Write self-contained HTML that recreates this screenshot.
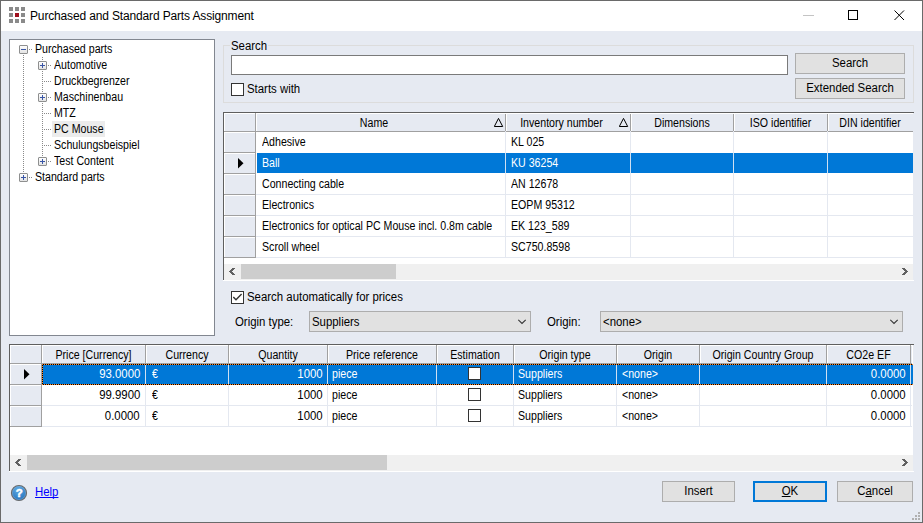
<!DOCTYPE html>
<html><head><meta charset="utf-8"><style>
html,body{margin:0;padding:0}
body{width:923px;height:523px;overflow:hidden;position:relative;background:#e6eaf2;font-family:"Liberation Sans",sans-serif}
body div{position:absolute;box-sizing:border-box}
.t,.tg,.tt{font-size:12px;line-height:13px;white-space:pre;color:#000}
.t{transform:scaleX(0.95)}
.tg{transform:scaleX(0.885)}
.tt{font-size:12px;line-height:14px;letter-spacing:-0.15px}
</style></head><body>
<div style="left:0px;top:0px;width:923px;height:31px;background:#fff"></div>
<div style="left:0px;top:0px;width:923px;height:1px;background:#6a6a6a"></div>
<div style="left:0px;top:0px;width:1px;height:523px;background:#6a6a6a"></div>
<div style="left:922px;top:0px;width:1px;height:523px;background:#6a6a6a"></div>
<div style="left:0px;top:522px;width:923px;height:1px;background:#6a6a6a"></div>
<div style="left:9px;top:7px;width:4px;height:4px;background:#8a8a8a"></div>
<div style="left:9px;top:13px;width:4px;height:4px;background:#8a8a8a"></div>
<div style="left:9px;top:19px;width:4px;height:4px;background:#8a8a8a"></div>
<div style="left:15px;top:7px;width:4px;height:4px;background:#8a8a8a"></div>
<div style="left:15px;top:13px;width:4px;height:4px;background:#a0101e"></div>
<div style="left:15px;top:19px;width:4px;height:4px;background:#8a8a8a"></div>
<div style="left:21px;top:7px;width:4px;height:4px;background:#8a8a8a"></div>
<div style="left:21px;top:13px;width:4px;height:4px;background:#8a8a8a"></div>
<div style="left:21px;top:19px;width:4px;height:4px;background:#8a8a8a"></div>
<div class="tt" style="left:30px;top:9px">Purchased and Standard Parts Assignment</div>
<div style="left:803px;top:15px;width:11px;height:1px;background:#c4c4c4"></div>
<div style="left:848px;top:10px;width:10px;height:10px;border:1px solid #000"></div>
<svg style="position:absolute;left:894px;top:10px" width="11" height="11"><path d="M0.5 0.5L10 10M10 0.5L0.5 10" stroke="#000" stroke-width="1"/></svg>
<div style="left:9px;top:39px;width:206px;height:297px;background:#fff;border:1px solid #828790"></div>
<div style="left:52px;top:121px;width:53px;height:16px;background:#ececec"></div>
<div class="tg" style="left:35px;top:43px;transform-origin:0 0;">Purchased parts</div>
<div class="tg" style="left:54px;top:59px;transform-origin:0 0;">Automotive</div>
<div class="tg" style="left:54px;top:75px;transform-origin:0 0;">Druckbegrenzer</div>
<div class="tg" style="left:54px;top:91px;transform-origin:0 0;">Maschinenbau</div>
<div class="tg" style="left:54px;top:107px;transform-origin:0 0;">MTZ</div>
<div class="tg" style="left:54px;top:123px;transform-origin:0 0;">PC Mouse</div>
<div class="tg" style="left:54px;top:139px;transform-origin:0 0;">Schulungsbeispiel</div>
<div class="tg" style="left:54px;top:155px;transform-origin:0 0;">Test Content</div>
<div class="tg" style="left:35px;top:171px;transform-origin:0 0;">Standard parts</div>
<svg style="position:absolute;left:0;top:0" width="923" height="523" fill="#8a8a8a"><rect x="29" y="49" width="1" height="1"/><rect x="31" y="49" width="1" height="1"/><rect x="48" y="65" width="1" height="1"/><rect x="50" y="65" width="1" height="1"/><rect x="44" y="81" width="1" height="1"/><rect x="46" y="81" width="1" height="1"/><rect x="48" y="81" width="1" height="1"/><rect x="50" y="81" width="1" height="1"/><rect x="48" y="97" width="1" height="1"/><rect x="50" y="97" width="1" height="1"/><rect x="44" y="113" width="1" height="1"/><rect x="46" y="113" width="1" height="1"/><rect x="48" y="113" width="1" height="1"/><rect x="50" y="113" width="1" height="1"/><rect x="44" y="129" width="1" height="1"/><rect x="46" y="129" width="1" height="1"/><rect x="48" y="129" width="1" height="1"/><rect x="50" y="129" width="1" height="1"/><rect x="44" y="145" width="1" height="1"/><rect x="46" y="145" width="1" height="1"/><rect x="48" y="145" width="1" height="1"/><rect x="50" y="145" width="1" height="1"/><rect x="48" y="161" width="1" height="1"/><rect x="50" y="161" width="1" height="1"/><rect x="29" y="177" width="1" height="1"/><rect x="31" y="177" width="1" height="1"/><rect x="23" y="55" width="1" height="1"/><rect x="23" y="57" width="1" height="1"/><rect x="23" y="59" width="1" height="1"/><rect x="23" y="61" width="1" height="1"/><rect x="23" y="63" width="1" height="1"/><rect x="23" y="65" width="1" height="1"/><rect x="23" y="67" width="1" height="1"/><rect x="23" y="69" width="1" height="1"/><rect x="23" y="71" width="1" height="1"/><rect x="23" y="73" width="1" height="1"/><rect x="23" y="75" width="1" height="1"/><rect x="23" y="77" width="1" height="1"/><rect x="23" y="79" width="1" height="1"/><rect x="23" y="81" width="1" height="1"/><rect x="23" y="83" width="1" height="1"/><rect x="23" y="85" width="1" height="1"/><rect x="23" y="87" width="1" height="1"/><rect x="23" y="89" width="1" height="1"/><rect x="23" y="91" width="1" height="1"/><rect x="23" y="93" width="1" height="1"/><rect x="23" y="95" width="1" height="1"/><rect x="23" y="97" width="1" height="1"/><rect x="23" y="99" width="1" height="1"/><rect x="23" y="101" width="1" height="1"/><rect x="23" y="103" width="1" height="1"/><rect x="23" y="105" width="1" height="1"/><rect x="23" y="107" width="1" height="1"/><rect x="23" y="109" width="1" height="1"/><rect x="23" y="111" width="1" height="1"/><rect x="23" y="113" width="1" height="1"/><rect x="23" y="115" width="1" height="1"/><rect x="23" y="117" width="1" height="1"/><rect x="23" y="119" width="1" height="1"/><rect x="23" y="121" width="1" height="1"/><rect x="23" y="123" width="1" height="1"/><rect x="23" y="125" width="1" height="1"/><rect x="23" y="127" width="1" height="1"/><rect x="23" y="129" width="1" height="1"/><rect x="23" y="131" width="1" height="1"/><rect x="23" y="133" width="1" height="1"/><rect x="23" y="135" width="1" height="1"/><rect x="23" y="137" width="1" height="1"/><rect x="23" y="139" width="1" height="1"/><rect x="23" y="141" width="1" height="1"/><rect x="23" y="143" width="1" height="1"/><rect x="23" y="145" width="1" height="1"/><rect x="23" y="147" width="1" height="1"/><rect x="23" y="149" width="1" height="1"/><rect x="23" y="151" width="1" height="1"/><rect x="23" y="153" width="1" height="1"/><rect x="23" y="155" width="1" height="1"/><rect x="23" y="157" width="1" height="1"/><rect x="23" y="159" width="1" height="1"/><rect x="23" y="161" width="1" height="1"/><rect x="23" y="163" width="1" height="1"/><rect x="23" y="165" width="1" height="1"/><rect x="23" y="167" width="1" height="1"/><rect x="23" y="169" width="1" height="1"/><rect x="23" y="171" width="1" height="1"/><rect x="42" y="57" width="1" height="1"/><rect x="42" y="59" width="1" height="1"/><rect x="42" y="61" width="1" height="1"/><rect x="42" y="63" width="1" height="1"/><rect x="42" y="65" width="1" height="1"/><rect x="42" y="67" width="1" height="1"/><rect x="42" y="69" width="1" height="1"/><rect x="42" y="71" width="1" height="1"/><rect x="42" y="73" width="1" height="1"/><rect x="42" y="75" width="1" height="1"/><rect x="42" y="77" width="1" height="1"/><rect x="42" y="79" width="1" height="1"/><rect x="42" y="81" width="1" height="1"/><rect x="42" y="83" width="1" height="1"/><rect x="42" y="85" width="1" height="1"/><rect x="42" y="87" width="1" height="1"/><rect x="42" y="89" width="1" height="1"/><rect x="42" y="91" width="1" height="1"/><rect x="42" y="93" width="1" height="1"/><rect x="42" y="95" width="1" height="1"/><rect x="42" y="97" width="1" height="1"/><rect x="42" y="99" width="1" height="1"/><rect x="42" y="101" width="1" height="1"/><rect x="42" y="103" width="1" height="1"/><rect x="42" y="105" width="1" height="1"/><rect x="42" y="107" width="1" height="1"/><rect x="42" y="109" width="1" height="1"/><rect x="42" y="111" width="1" height="1"/><rect x="42" y="113" width="1" height="1"/><rect x="42" y="115" width="1" height="1"/><rect x="42" y="117" width="1" height="1"/><rect x="42" y="119" width="1" height="1"/><rect x="42" y="121" width="1" height="1"/><rect x="42" y="123" width="1" height="1"/><rect x="42" y="125" width="1" height="1"/><rect x="42" y="127" width="1" height="1"/><rect x="42" y="129" width="1" height="1"/><rect x="42" y="131" width="1" height="1"/><rect x="42" y="133" width="1" height="1"/><rect x="42" y="135" width="1" height="1"/><rect x="42" y="137" width="1" height="1"/><rect x="42" y="139" width="1" height="1"/><rect x="42" y="141" width="1" height="1"/><rect x="42" y="143" width="1" height="1"/><rect x="42" y="145" width="1" height="1"/><rect x="42" y="147" width="1" height="1"/><rect x="42" y="149" width="1" height="1"/><rect x="42" y="151" width="1" height="1"/><rect x="42" y="153" width="1" height="1"/><rect x="42" y="155" width="1" height="1"/></svg>
<div style="left:19px;top:45px;width:9px;height:9px;border:1px solid #8e8f8f;border-radius:1px;background:linear-gradient(#fdfdfd,#e4e4e4)"></div>
<div style="left:21px;top:49px;width:5px;height:1px;background:#3a56a6"></div>
<div style="left:38px;top:61px;width:9px;height:9px;border:1px solid #8e8f8f;border-radius:1px;background:linear-gradient(#fdfdfd,#e4e4e4)"></div>
<div style="left:40px;top:65px;width:5px;height:1px;background:#3a56a6"></div>
<div style="left:42px;top:63px;width:1px;height:5px;background:#3a56a6"></div>
<div style="left:38px;top:93px;width:9px;height:9px;border:1px solid #8e8f8f;border-radius:1px;background:linear-gradient(#fdfdfd,#e4e4e4)"></div>
<div style="left:40px;top:97px;width:5px;height:1px;background:#3a56a6"></div>
<div style="left:42px;top:95px;width:1px;height:5px;background:#3a56a6"></div>
<div style="left:38px;top:157px;width:9px;height:9px;border:1px solid #8e8f8f;border-radius:1px;background:linear-gradient(#fdfdfd,#e4e4e4)"></div>
<div style="left:40px;top:161px;width:5px;height:1px;background:#3a56a6"></div>
<div style="left:42px;top:159px;width:1px;height:5px;background:#3a56a6"></div>
<div style="left:19px;top:173px;width:9px;height:9px;border:1px solid #8e8f8f;border-radius:1px;background:linear-gradient(#fdfdfd,#e4e4e4)"></div>
<div style="left:21px;top:177px;width:5px;height:1px;background:#3a56a6"></div>
<div style="left:23px;top:175px;width:1px;height:5px;background:#3a56a6"></div>
<div style="left:223px;top:45px;width:691px;height:58px;border:1px solid #dcdcdc"></div>
<div style="left:230px;top:40px;width:38px;height:10px;background:#e6eaf2"></div>
<div class="t" style="left:231px;top:40px;transform-origin:0 0;">Search</div>
<div style="left:231px;top:55px;width:557px;height:20px;background:#fff;border:1px solid #7a7a7a"></div>
<div style="left:795px;top:53px;width:110px;height:21px;background:#e1e1e1;border:1px solid #adadad"></div>
<div class="t" style="left:795px;top:57px;width:110px;text-align:center;transform-origin:50% 0;">Search</div>
<div style="left:795px;top:78px;width:110px;height:21px;background:#e1e1e1;border:1px solid #adadad"></div>
<div class="t" style="left:795px;top:82px;width:110px;text-align:center;transform-origin:50% 0;">Extended Search</div>
<div style="left:231px;top:83px;width:13px;height:13px;background:#fff;border:1px solid #333"></div>
<div class="t" style="left:247px;top:83px;transform-origin:0 0;">Starts with</div>
<div style="left:224px;top:113px;width:689px;height:167px;background:#fff"></div>
<div style="left:223px;top:112px;width:691px;height:1px;background:#5f5f5f"></div>
<div style="left:223px;top:112px;width:1px;height:169px;background:#5f5f5f"></div>
<div style="left:223px;top:280px;width:691px;height:1px;background:#fff"></div>
<div style="left:224px;top:113px;width:689px;height:18px;background:#e6eaf2"></div>
<div style="left:224px;top:131px;width:689px;height:1px;background:#a0a0a0"></div>
<div style="left:255px;top:113px;width:1px;height:18px;background:#a0a0a0"></div>
<div style="left:256px;top:113px;width:1px;height:18px;background:#fff"></div>
<div style="left:505px;top:113px;width:1px;height:18px;background:#a0a0a0"></div>
<div style="left:506px;top:113px;width:1px;height:18px;background:#fff"></div>
<div style="left:630px;top:113px;width:1px;height:18px;background:#a0a0a0"></div>
<div style="left:631px;top:113px;width:1px;height:18px;background:#fff"></div>
<div style="left:733px;top:113px;width:1px;height:18px;background:#a0a0a0"></div>
<div style="left:734px;top:113px;width:1px;height:18px;background:#fff"></div>
<div style="left:827px;top:113px;width:1px;height:18px;background:#a0a0a0"></div>
<div style="left:828px;top:113px;width:1px;height:18px;background:#fff"></div>
<div style="left:224px;top:113px;width:1px;height:18px;background:#fff"></div>
<div style="left:224px;top:113px;width:689px;height:1px;background:#fff"></div>
<div class="tg" style="left:255px;top:117px;width:238px;text-align:center;transform-origin:50% 0;">Name</div>
<svg style="position:absolute;left:494px;top:118px" width="10" height="10"><path d="M4.5 0.4L8.7 8.5H0.3Z" fill="none" stroke="#000" stroke-width="1"/></svg>
<div class="tg" style="left:505px;top:117px;width:113px;text-align:center;transform-origin:50% 0;">Inventory number</div>
<svg style="position:absolute;left:619px;top:118px" width="10" height="10"><path d="M4.5 0.4L8.7 8.5H0.3Z" fill="none" stroke="#000" stroke-width="1"/></svg>
<div class="tg" style="left:631px;top:117px;width:102px;text-align:center;transform-origin:50% 0;">Dimensions</div>
<div class="tg" style="left:734px;top:117px;width:93px;text-align:center;transform-origin:50% 0;">ISO identifier</div>
<div class="tg" style="left:828px;top:117px;width:84px;text-align:center;transform-origin:50% 0;">DIN identifier</div>
<div style="left:224px;top:132px;width:31px;height:126px;background:#e6eaf2"></div>
<div style="left:255px;top:113px;width:1px;height:145px;background:#a0a0a0"></div>
<div style="left:224px;top:152px;width:32px;height:1px;background:#a0a0a0"></div>
<div style="left:225px;top:132px;width:30px;height:1px;background:#fff"></div>
<div style="left:224px;top:132px;width:1px;height:20px;background:#fff"></div>
<div style="left:505px;top:131px;width:1px;height:22px;background:#e4e8f0"></div>
<div style="left:630px;top:131px;width:1px;height:22px;background:#e4e8f0"></div>
<div style="left:733px;top:131px;width:1px;height:22px;background:#e4e8f0"></div>
<div style="left:827px;top:131px;width:1px;height:22px;background:#e4e8f0"></div>
<div class="tg" style="left:262px;top:136px;transform-origin:0 0;color:#000">Adhesive</div>
<div class="tg" style="left:511px;top:136px;transform-origin:0 0;color:#000">KL 025</div>
<div style="left:224px;top:173px;width:32px;height:1px;background:#a0a0a0"></div>
<div style="left:225px;top:153px;width:30px;height:1px;background:#fff"></div>
<div style="left:224px;top:153px;width:1px;height:20px;background:#fff"></div>
<div style="left:505px;top:152px;width:1px;height:22px;background:#e4e8f0"></div>
<div style="left:630px;top:152px;width:1px;height:22px;background:#e4e8f0"></div>
<div style="left:733px;top:152px;width:1px;height:22px;background:#e4e8f0"></div>
<div style="left:827px;top:152px;width:1px;height:22px;background:#e4e8f0"></div>
<div style="left:257px;top:153px;width:656px;height:20px;background:#0078d7"></div>
<div style="left:505px;top:153px;width:1px;height:20px;background:#cfe0f2"></div>
<div style="left:630px;top:153px;width:1px;height:20px;background:#cfe0f2"></div>
<div style="left:733px;top:153px;width:1px;height:20px;background:#cfe0f2"></div>
<div style="left:827px;top:153px;width:1px;height:20px;background:#cfe0f2"></div>
<svg style="position:absolute;left:238px;top:158px" width="6" height="11"><path d="M0 0L5.5 5.2L0 10.4Z" fill="#000"/></svg>
<div class="tg" style="left:262px;top:157px;transform-origin:0 0;color:#fff">Ball</div>
<div class="tg" style="left:511px;top:157px;transform-origin:0 0;color:#fff">KU 36254</div>
<div style="left:224px;top:194px;width:32px;height:1px;background:#a0a0a0"></div>
<div style="left:225px;top:174px;width:30px;height:1px;background:#fff"></div>
<div style="left:224px;top:174px;width:1px;height:20px;background:#fff"></div>
<div style="left:256px;top:194px;width:657px;height:1px;background:#e4e8f0"></div>
<div style="left:505px;top:173px;width:1px;height:22px;background:#e4e8f0"></div>
<div style="left:630px;top:173px;width:1px;height:22px;background:#e4e8f0"></div>
<div style="left:733px;top:173px;width:1px;height:22px;background:#e4e8f0"></div>
<div style="left:827px;top:173px;width:1px;height:22px;background:#e4e8f0"></div>
<div class="tg" style="left:262px;top:178px;transform-origin:0 0;color:#000">Connecting cable</div>
<div class="tg" style="left:511px;top:178px;transform-origin:0 0;color:#000">AN 12678</div>
<div style="left:224px;top:215px;width:32px;height:1px;background:#a0a0a0"></div>
<div style="left:225px;top:195px;width:30px;height:1px;background:#fff"></div>
<div style="left:224px;top:195px;width:1px;height:20px;background:#fff"></div>
<div style="left:256px;top:215px;width:657px;height:1px;background:#e4e8f0"></div>
<div style="left:505px;top:194px;width:1px;height:22px;background:#e4e8f0"></div>
<div style="left:630px;top:194px;width:1px;height:22px;background:#e4e8f0"></div>
<div style="left:733px;top:194px;width:1px;height:22px;background:#e4e8f0"></div>
<div style="left:827px;top:194px;width:1px;height:22px;background:#e4e8f0"></div>
<div class="tg" style="left:262px;top:199px;transform-origin:0 0;color:#000">Electronics</div>
<div class="tg" style="left:511px;top:199px;transform-origin:0 0;color:#000">EOPM 95312</div>
<div style="left:224px;top:236px;width:32px;height:1px;background:#a0a0a0"></div>
<div style="left:225px;top:216px;width:30px;height:1px;background:#fff"></div>
<div style="left:224px;top:216px;width:1px;height:20px;background:#fff"></div>
<div style="left:256px;top:236px;width:657px;height:1px;background:#e4e8f0"></div>
<div style="left:505px;top:215px;width:1px;height:22px;background:#e4e8f0"></div>
<div style="left:630px;top:215px;width:1px;height:22px;background:#e4e8f0"></div>
<div style="left:733px;top:215px;width:1px;height:22px;background:#e4e8f0"></div>
<div style="left:827px;top:215px;width:1px;height:22px;background:#e4e8f0"></div>
<div class="tg" style="left:262px;top:220px;transform-origin:0 0;color:#000">Electronics for optical PC Mouse incl. 0.8m cable</div>
<div class="tg" style="left:511px;top:220px;transform-origin:0 0;color:#000">EK 123_589</div>
<div style="left:224px;top:257px;width:32px;height:1px;background:#a0a0a0"></div>
<div style="left:225px;top:237px;width:30px;height:1px;background:#fff"></div>
<div style="left:224px;top:237px;width:1px;height:20px;background:#fff"></div>
<div style="left:256px;top:257px;width:657px;height:1px;background:#e4e8f0"></div>
<div style="left:505px;top:236px;width:1px;height:22px;background:#e4e8f0"></div>
<div style="left:630px;top:236px;width:1px;height:22px;background:#e4e8f0"></div>
<div style="left:733px;top:236px;width:1px;height:22px;background:#e4e8f0"></div>
<div style="left:827px;top:236px;width:1px;height:22px;background:#e4e8f0"></div>
<div class="tg" style="left:262px;top:241px;transform-origin:0 0;color:#000">Scroll wheel</div>
<div class="tg" style="left:511px;top:241px;transform-origin:0 0;color:#000">SC750.8598</div>
<div style="left:224px;top:264px;width:689px;height:16px;background:#f0f0f0"></div>
<div style="left:241px;top:264px;width:155px;height:15px;background:#cdcdcd"></div>
<svg style="position:absolute;left:229px;top:268px" width="6" height="7" fill="#606060" shape-rendering="crispEdges"><rect x="3" y="0" width="3" height="1"/><rect x="2" y="1" width="3" height="1"/><rect x="1" y="2" width="3" height="1"/><rect x="0" y="3" width="3" height="1"/><rect x="1" y="4" width="3" height="1"/><rect x="2" y="5" width="3" height="1"/><rect x="3" y="6" width="3" height="1"/></svg>
<svg style="position:absolute;left:902px;top:268px" width="6" height="7" fill="#606060" shape-rendering="crispEdges"><rect x="0" y="0" width="3" height="1"/><rect x="1" y="1" width="3" height="1"/><rect x="2" y="2" width="3" height="1"/><rect x="3" y="3" width="3" height="1"/><rect x="2" y="4" width="3" height="1"/><rect x="1" y="5" width="3" height="1"/><rect x="0" y="6" width="3" height="1"/></svg>
<div style="left:231px;top:291px;width:13px;height:13px;background:#fff;border:1px solid #333"></div>
<svg style="position:absolute;left:233px;top:293px" width="10" height="9"><path d="M0.3 4L3 6.7L8.6 1.1" fill="none" stroke="#333" stroke-width="1.4"/></svg>
<div class="t" style="left:247px;top:291px;transform-origin:0 0;">Search automatically for prices</div>
<div class="t" style="left:235px;top:316px;transform-origin:0 0;">Origin type:</div>
<div style="left:309px;top:311px;width:222px;height:21px;background:#e1e1e1;border:1px solid #adadad"></div>
<div class="t" style="left:312px;top:316px;transform-origin:0 0;">Suppliers</div>
<svg style="position:absolute;left:518px;top:319px" width="9" height="6"><path d="M0.3 0.8L4 4.5L7.7 0.8" fill="none" stroke="#333" stroke-width="1.1"/></svg>
<div class="t" style="left:547px;top:316px;transform-origin:0 0;">Origin:</div>
<div style="left:600px;top:311px;width:303px;height:21px;background:#e1e1e1;border:1px solid #adadad"></div>
<div class="t" style="left:603px;top:316px;transform-origin:0 0;">&lt;none&gt;</div>
<svg style="position:absolute;left:890px;top:319px" width="9" height="6"><path d="M0.3 0.8L4 4.5L7.7 0.8" fill="none" stroke="#333" stroke-width="1.1"/></svg>
<div style="left:10px;top:345px;width:903px;height:126px;background:#fff"></div>
<div style="left:9px;top:344px;width:905px;height:1px;background:#5f5f5f"></div>
<div style="left:9px;top:344px;width:1px;height:128px;background:#5f5f5f"></div>
<div style="left:9px;top:471px;width:905px;height:1px;background:#fff"></div>
<div style="left:10px;top:345px;width:902px;height:18px;background:#e6eaf2"></div>
<div style="left:10px;top:363px;width:902px;height:1px;background:#a0a0a0"></div>
<div style="left:10px;top:345px;width:902px;height:1px;background:#fff"></div>
<div style="left:10px;top:345px;width:1px;height:18px;background:#fff"></div>
<div style="left:41px;top:345px;width:1px;height:18px;background:#a0a0a0"></div>
<div style="left:42px;top:345px;width:1px;height:18px;background:#fff"></div>
<div class="tg" style="left:42px;top:349px;width:103px;text-align:center;transform-origin:50% 0;">Price [Currency]</div>
<div style="left:145px;top:345px;width:1px;height:18px;background:#a0a0a0"></div>
<div style="left:146px;top:345px;width:1px;height:18px;background:#fff"></div>
<div class="tg" style="left:146px;top:349px;width:82px;text-align:center;transform-origin:50% 0;">Currency</div>
<div style="left:228px;top:345px;width:1px;height:18px;background:#a0a0a0"></div>
<div style="left:229px;top:345px;width:1px;height:18px;background:#fff"></div>
<div class="tg" style="left:229px;top:349px;width:98px;text-align:center;transform-origin:50% 0;">Quantity</div>
<div style="left:327px;top:345px;width:1px;height:18px;background:#a0a0a0"></div>
<div style="left:328px;top:345px;width:1px;height:18px;background:#fff"></div>
<div class="tg" style="left:328px;top:349px;width:108px;text-align:center;transform-origin:50% 0;">Price reference</div>
<div style="left:436px;top:345px;width:1px;height:18px;background:#a0a0a0"></div>
<div style="left:437px;top:345px;width:1px;height:18px;background:#fff"></div>
<div class="tg" style="left:437px;top:349px;width:76px;text-align:center;transform-origin:50% 0;">Estimation</div>
<div style="left:513px;top:345px;width:1px;height:18px;background:#a0a0a0"></div>
<div style="left:514px;top:345px;width:1px;height:18px;background:#fff"></div>
<div class="tg" style="left:514px;top:349px;width:102px;text-align:center;transform-origin:50% 0;">Origin type</div>
<div style="left:616px;top:345px;width:1px;height:18px;background:#a0a0a0"></div>
<div style="left:617px;top:345px;width:1px;height:18px;background:#fff"></div>
<div class="tg" style="left:617px;top:349px;width:82px;text-align:center;transform-origin:50% 0;">Origin</div>
<div style="left:699px;top:345px;width:1px;height:18px;background:#a0a0a0"></div>
<div style="left:700px;top:345px;width:1px;height:18px;background:#fff"></div>
<div class="tg" style="left:700px;top:349px;width:126px;text-align:center;transform-origin:50% 0;">Origin Country Group</div>
<div style="left:826px;top:345px;width:1px;height:18px;background:#a0a0a0"></div>
<div style="left:827px;top:345px;width:1px;height:18px;background:#fff"></div>
<div class="tg" style="left:827px;top:349px;width:83px;text-align:center;transform-origin:50% 0;">CO2e EF</div>
<div style="left:910px;top:345px;width:1px;height:18px;background:#a0a0a0"></div>
<div style="left:10px;top:364px;width:31px;height:63px;background:#e6eaf2"></div>
<div style="left:41px;top:345px;width:1px;height:82px;background:#a0a0a0"></div>
<div style="left:10px;top:384px;width:32px;height:1px;background:#a0a0a0"></div>
<div style="left:11px;top:364px;width:30px;height:1px;background:#fff"></div>
<div style="left:10px;top:364px;width:1px;height:20px;background:#fff"></div>
<div style="left:42px;top:384px;width:870px;height:1px;background:#e4e8f0"></div>
<div style="left:145px;top:364px;width:1px;height:20px;background:#e4e8f0"></div>
<div style="left:228px;top:364px;width:1px;height:20px;background:#e4e8f0"></div>
<div style="left:327px;top:364px;width:1px;height:20px;background:#e4e8f0"></div>
<div style="left:436px;top:364px;width:1px;height:20px;background:#e4e8f0"></div>
<div style="left:513px;top:364px;width:1px;height:20px;background:#e4e8f0"></div>
<div style="left:616px;top:364px;width:1px;height:20px;background:#e4e8f0"></div>
<div style="left:699px;top:364px;width:1px;height:20px;background:#e4e8f0"></div>
<div style="left:826px;top:364px;width:1px;height:20px;background:#e4e8f0"></div>
<div style="left:910px;top:364px;width:1px;height:20px;background:#e4e8f0"></div>
<div style="left:42px;top:364px;width:871px;height:21px;background:#0078d7"></div>
<div style="left:145px;top:365px;width:1px;height:19px;background:#cfe0f2"></div>
<div style="left:228px;top:365px;width:1px;height:19px;background:#cfe0f2"></div>
<div style="left:327px;top:365px;width:1px;height:19px;background:#cfe0f2"></div>
<div style="left:436px;top:365px;width:1px;height:19px;background:#cfe0f2"></div>
<div style="left:513px;top:365px;width:1px;height:19px;background:#cfe0f2"></div>
<div style="left:616px;top:365px;width:1px;height:19px;background:#cfe0f2"></div>
<div style="left:699px;top:365px;width:1px;height:19px;background:#cfe0f2"></div>
<div style="left:826px;top:365px;width:1px;height:19px;background:#cfe0f2"></div>
<div style="left:910px;top:365px;width:1px;height:19px;background:#cfe0f2"></div>
<div style="left:42px;top:364px;width:871px;height:1px;background:repeating-linear-gradient(90deg,#ff8728 0 1px,#000 1px 2px)"></div>
<div style="left:42px;top:384px;width:871px;height:1px;background:repeating-linear-gradient(90deg,#ff8728 0 1px,#000 1px 2px)"></div>
<div style="left:42px;top:364px;width:1px;height:21px;background:repeating-linear-gradient(180deg,#ff8728 0 1px,#000 1px 2px)"></div>
<svg style="position:absolute;left:24px;top:369px" width="6" height="11"><path d="M0 0L5.5 5.2L0 10.4Z" fill="#000"/></svg>
<div class="tg" style="left:0px;top:368px;transform-origin:0 0;"></div>
<div class="t" style="right:783px;top:368px;transform-origin:100% 0;color:#fff">93.0000</div>
<div class="tg" style="left:152px;top:368px;transform-origin:0 0;color:#fff">€</div>
<div class="t" style="right:600px;top:368px;transform-origin:100% 0;color:#fff">1000</div>
<div class="tg" style="left:332px;top:368px;transform-origin:0 0;color:#fff">piece</div>
<div style="left:468px;top:367px;width:13px;height:13px;background:#fff;border:1px solid #333"></div>
<div class="tg" style="left:518px;top:368px;transform-origin:0 0;color:#fff">Suppliers</div>
<div class="tg" style="left:622px;top:368px;transform-origin:0 0;color:#fff">&lt;none&gt;</div>
<div class="t" style="right:17px;top:368px;transform-origin:100% 0;color:#fff">0.0000</div>
<div style="left:10px;top:405px;width:32px;height:1px;background:#a0a0a0"></div>
<div style="left:11px;top:385px;width:30px;height:1px;background:#fff"></div>
<div style="left:10px;top:385px;width:1px;height:20px;background:#fff"></div>
<div style="left:42px;top:405px;width:870px;height:1px;background:#e4e8f0"></div>
<div style="left:145px;top:385px;width:1px;height:20px;background:#e4e8f0"></div>
<div style="left:228px;top:385px;width:1px;height:20px;background:#e4e8f0"></div>
<div style="left:327px;top:385px;width:1px;height:20px;background:#e4e8f0"></div>
<div style="left:436px;top:385px;width:1px;height:20px;background:#e4e8f0"></div>
<div style="left:513px;top:385px;width:1px;height:20px;background:#e4e8f0"></div>
<div style="left:616px;top:385px;width:1px;height:20px;background:#e4e8f0"></div>
<div style="left:699px;top:385px;width:1px;height:20px;background:#e4e8f0"></div>
<div style="left:826px;top:385px;width:1px;height:20px;background:#e4e8f0"></div>
<div style="left:910px;top:385px;width:1px;height:20px;background:#e4e8f0"></div>
<div class="tg" style="left:0px;top:389px;transform-origin:0 0;"></div>
<div class="t" style="right:783px;top:389px;transform-origin:100% 0;color:#000">99.9900</div>
<div class="tg" style="left:152px;top:389px;transform-origin:0 0;color:#000">€</div>
<div class="t" style="right:600px;top:389px;transform-origin:100% 0;color:#000">1000</div>
<div class="tg" style="left:332px;top:389px;transform-origin:0 0;color:#000">piece</div>
<div style="left:468px;top:388px;width:13px;height:13px;background:#fff;border:1px solid #333"></div>
<div class="tg" style="left:518px;top:389px;transform-origin:0 0;color:#000">Suppliers</div>
<div class="tg" style="left:622px;top:389px;transform-origin:0 0;color:#000">&lt;none&gt;</div>
<div class="t" style="right:17px;top:389px;transform-origin:100% 0;color:#000">0.0000</div>
<div style="left:10px;top:426px;width:32px;height:1px;background:#a0a0a0"></div>
<div style="left:11px;top:406px;width:30px;height:1px;background:#fff"></div>
<div style="left:10px;top:406px;width:1px;height:20px;background:#fff"></div>
<div style="left:42px;top:426px;width:870px;height:1px;background:#e4e8f0"></div>
<div style="left:145px;top:406px;width:1px;height:20px;background:#e4e8f0"></div>
<div style="left:228px;top:406px;width:1px;height:20px;background:#e4e8f0"></div>
<div style="left:327px;top:406px;width:1px;height:20px;background:#e4e8f0"></div>
<div style="left:436px;top:406px;width:1px;height:20px;background:#e4e8f0"></div>
<div style="left:513px;top:406px;width:1px;height:20px;background:#e4e8f0"></div>
<div style="left:616px;top:406px;width:1px;height:20px;background:#e4e8f0"></div>
<div style="left:699px;top:406px;width:1px;height:20px;background:#e4e8f0"></div>
<div style="left:826px;top:406px;width:1px;height:20px;background:#e4e8f0"></div>
<div style="left:910px;top:406px;width:1px;height:20px;background:#e4e8f0"></div>
<div class="tg" style="left:0px;top:410px;transform-origin:0 0;"></div>
<div class="t" style="right:783px;top:410px;transform-origin:100% 0;color:#000">0.0000</div>
<div class="tg" style="left:152px;top:410px;transform-origin:0 0;color:#000">€</div>
<div class="t" style="right:600px;top:410px;transform-origin:100% 0;color:#000">1000</div>
<div class="tg" style="left:332px;top:410px;transform-origin:0 0;color:#000">piece</div>
<div style="left:468px;top:409px;width:13px;height:13px;background:#fff;border:1px solid #333"></div>
<div class="tg" style="left:518px;top:410px;transform-origin:0 0;color:#000">Suppliers</div>
<div class="tg" style="left:622px;top:410px;transform-origin:0 0;color:#000">&lt;none&gt;</div>
<div class="t" style="right:17px;top:410px;transform-origin:100% 0;color:#000">0.0000</div>
<div style="left:10px;top:455px;width:903px;height:16px;background:#f0f0f0"></div>
<div style="left:27px;top:455px;width:360px;height:15px;background:#cdcdcd"></div>
<svg style="position:absolute;left:15px;top:459px" width="6" height="7" fill="#606060" shape-rendering="crispEdges"><rect x="3" y="0" width="3" height="1"/><rect x="2" y="1" width="3" height="1"/><rect x="1" y="2" width="3" height="1"/><rect x="0" y="3" width="3" height="1"/><rect x="1" y="4" width="3" height="1"/><rect x="2" y="5" width="3" height="1"/><rect x="3" y="6" width="3" height="1"/></svg>
<svg style="position:absolute;left:902px;top:459px" width="6" height="7" fill="#606060" shape-rendering="crispEdges"><rect x="0" y="0" width="3" height="1"/><rect x="1" y="1" width="3" height="1"/><rect x="2" y="2" width="3" height="1"/><rect x="3" y="3" width="3" height="1"/><rect x="2" y="4" width="3" height="1"/><rect x="1" y="5" width="3" height="1"/><rect x="0" y="6" width="3" height="1"/></svg>
<svg style="position:absolute;left:10px;top:484px" width="18" height="18"><defs><radialGradient id="hg" cx="0.45" cy="0.3" r="0.75"><stop offset="0" stop-color="#63aee6"/><stop offset="1" stop-color="#1d6cb8"/></radialGradient></defs><circle cx="9" cy="9" r="7.5" fill="url(#hg)" stroke="#6b6b6b" stroke-width="1.2"/><circle cx="9" cy="9" r="6.5" fill="none" stroke="#9fc4e6" stroke-width="0.6" opacity="0.6"/><text x="9.2" y="13.4" font-family="Liberation Sans" font-weight="bold" font-size="11.5" fill="#fff" stroke="#fff" stroke-width="0.5" text-anchor="middle">?</text></svg>
<div class="t" style="left:35px;top:486px;transform-origin:0 0;color:#0000ff;text-decoration:underline;text-decoration-skip-ink:none">Help</div>
<div style="left:662px;top:481px;width:73px;height:21px;background:#e1e1e1;border:1px solid #adadad"></div>
<div class="t" style="left:662px;top:485px;width:73px;text-align:center;transform-origin:50% 0;">Insert</div>
<div style="left:753px;top:481px;width:74px;height:21px;background:#e1e1e1;border:2px solid #0078d7"></div>
<div class="t" style="left:753px;top:485px;width:74px;text-align:center;transform-origin:50% 0;"><u>O</u>K</div>
<div style="left:837px;top:481px;width:76px;height:21px;background:#e1e1e1;border:1px solid #adadad"></div>
<div class="t" style="left:837px;top:485px;width:76px;text-align:center;transform-origin:50% 0;">C<u>a</u>ncel</div>
<div style="left:918px;top:512px;width:2px;height:2px;background:#b0b0b0"></div>
<div style="left:915px;top:515px;width:2px;height:2px;background:#b0b0b0"></div>
<div style="left:918px;top:515px;width:2px;height:2px;background:#b0b0b0"></div>
<div style="left:912px;top:518px;width:2px;height:2px;background:#b0b0b0"></div>
<div style="left:915px;top:518px;width:2px;height:2px;background:#b0b0b0"></div>
<div style="left:918px;top:518px;width:2px;height:2px;background:#b0b0b0"></div>
</body></html>
